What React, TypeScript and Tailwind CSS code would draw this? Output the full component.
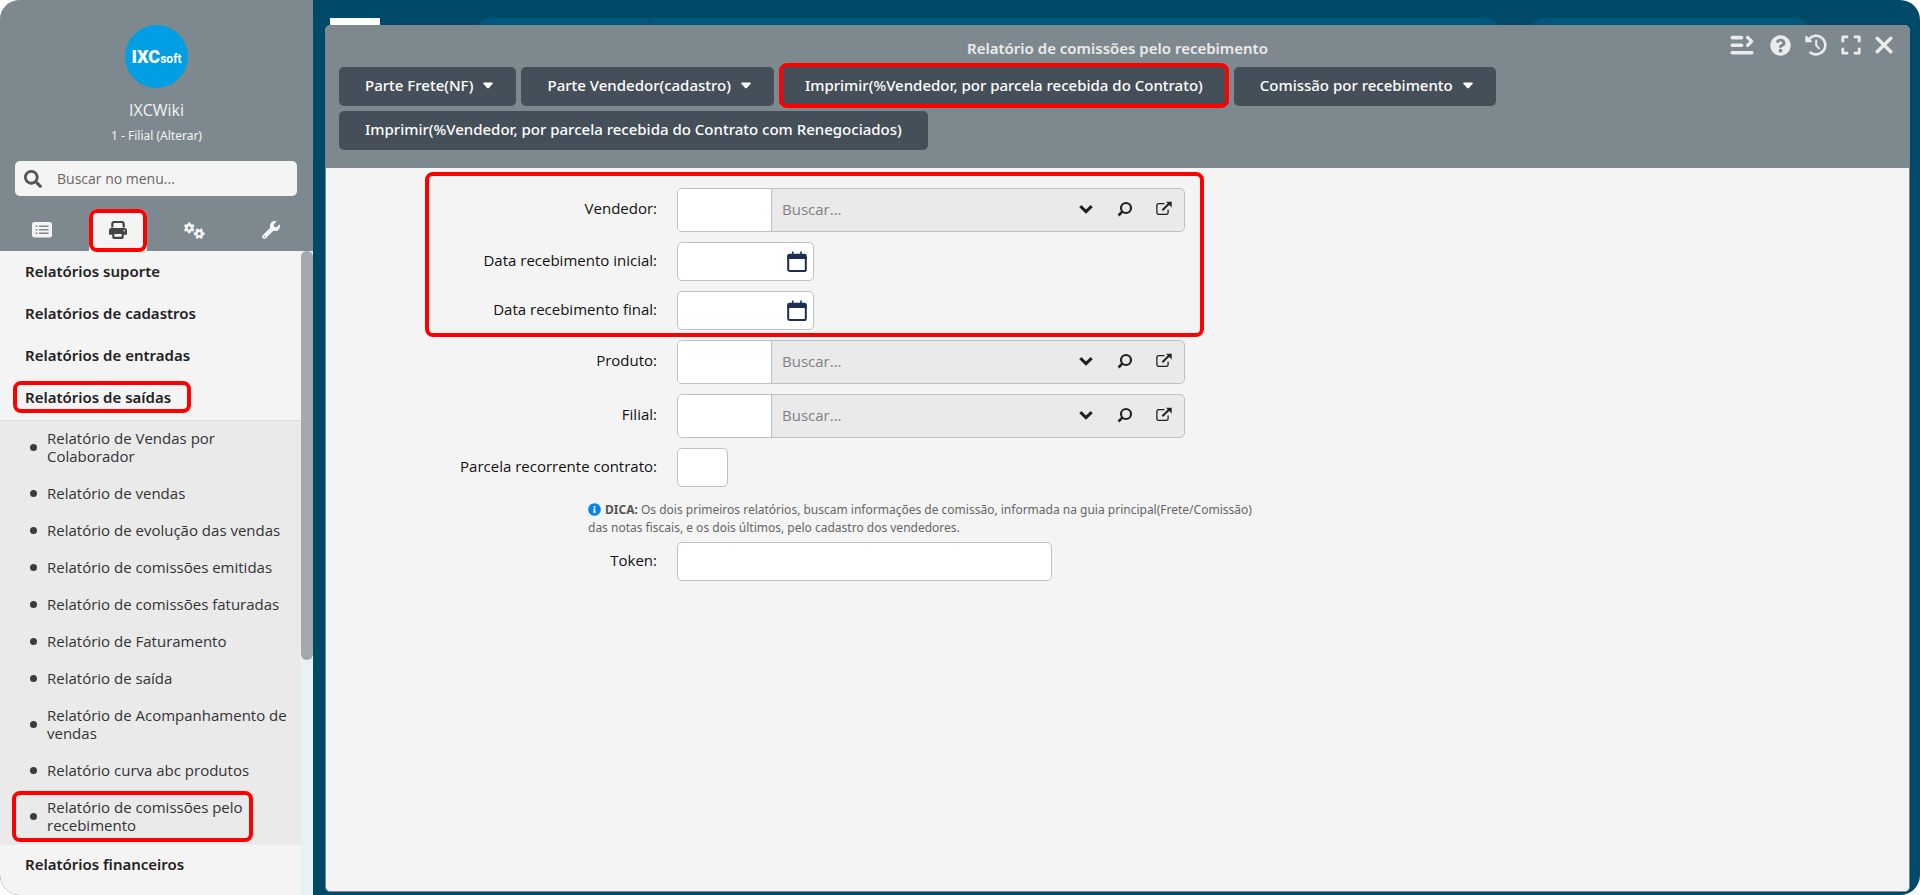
import React from 'react';
import { FaWrench, FaSearch, FaInfoCircle, FaQuestionCircle } from 'react-icons/fa';
import { FaGears } from 'react-icons/fa6';

type MenuItem = { label: string; active?: boolean };

const topMenu: MenuItem[] = [
  { label: 'Relatórios suporte' },
  { label: 'Relatórios de cadastros' },
  { label: 'Relatórios de entradas' },
  { label: 'Relatórios de saídas', active: true },
];

const subMenu: MenuItem[] = [
  { label: 'Relatório de Vendas por Colaborador' },
  { label: 'Relatório de vendas' },
  { label: 'Relatório de evolução das vendas' },
  { label: 'Relatório de comissões emitidas' },
  { label: 'Relatório de comissões faturadas' },
  { label: 'Relatório de Faturamento' },
  { label: 'Relatório de saída' },
  { label: 'Relatório de Acompanhamento de vendas' },
  { label: 'Relatório curva abc produtos' },
  { label: 'Relatório de comissões pelo recebimento', active: true },
];

const actions = [
  { label: 'Parte Frete(NF)', menu: true },
  { label: 'Parte Vendedor(cadastro)', menu: true },
  { label: 'Imprimir(%Vendedor, por parcela recebida do Contrato)', active: true },
  { label: 'Comissão por recebimento', menu: true },
  { label: 'Imprimir(%Vendedor, por parcela recebida do Contrato com Renegociados)' },
];

const Mark: React.FC<{ className: string }> = ({ className }) => (
  <span className={`pointer-events-none absolute border-4 border-[#ff0000] rounded-lg ${className}`} />
);

const CaretIcon = () => (
  <svg width="10" height="7" viewBox="0 0 10 7" fill="currentColor" className="-mr-[3px]">
    <path d="M1 .5h8c.8 0 1.100.8.6 1.300L5.900 5.900c-.5.5-1.300.5-1.800 0L.4 1.800C-.1 1.300.2.5 1 .5z" />
  </svg>
);

const ChevronIcon = () => (
  <svg width="16" height="16" viewBox="0 0 16 16" fill="none" stroke="#222" strokeWidth="3">
    <path d="M2.300 5.200 8 10.600l5.700-5.400" />
  </svg>
);

const LookupIcon = () => (
  <svg width="16" height="16" viewBox="0 0 16 16" fill="none" stroke="#222">
    <circle cx="9" cy="7" r="5" strokeWidth="2.200" />
    <path d="M5.300 10.700 1.500 14.500" strokeWidth="2.600" />
  </svg>
);

const ExternalIcon = () => (
  <svg width="16" height="16" viewBox="0 0 16 16" fill="none" stroke="#222">
    <path d="M8.500 2.700H2.500a1.600 1.600 0 0 0-1.600 1.600v7.400a1.600 1.600 0 0 0 1.600 1.600h8a1.600 1.600 0 0 0 1.600-1.600V8.500" strokeWidth="1.300" />
    <path d="M6.300 9.200 13 2.800" strokeWidth="2" />
    <path d="M10 .8h5.700v5.600z" fill="#222" stroke="none" />
  </svg>
);

const CalendarIcon = () => (
  <svg width="20" height="22" viewBox="0 0 20 22" fill="none" stroke="#1c2f50">
    <path d="M1.200 5.500v13a1.600 1.600 0 0 0 1.600 1.600h14.400a1.600 1.600 0 0 0 1.600-1.600v-13" strokeWidth="2" />
    <path d="M.2 8V5a2.200 2.200 0 0 1 2.200-2.200h15.200A2.200 2.200 0 0 1 19.800 5v3z" fill="#1c2f50" stroke="none" />
    <path d="M5.700.5v3M14 .5v3" strokeWidth="1.600" />
  </svg>
);

const ListIcon = () => (
  <svg width="20" height="16" viewBox="0 0 20 16">
    <rect width="20" height="15.500" rx="2.500" fill="#f4f4f4" />
    <path d="M3.600 4.200h1.800M3.600 7.700h1.800M3.600 11.200h1.800M7 4.200h9.500M7 7.700h9.500M7 11.200h9.500" stroke="#7d898e" strokeWidth="1.500" />
  </svg>
);

const PrintIcon = () => (
  <svg width="18" height="18" viewBox="0 0 18 18" fill="none" stroke="currentColor">
    <path d="M3.300 6.500V3a2 2 0 0 1 2-2h7.400a2 2 0 0 1 2 2v3.500" strokeWidth="2.200" />
    <path d="M2.500 7h13A2.500 2.500 0 0 1 18 9.500V13a.8.800 0 0 1-.8.800H.8A.8.800 0 0 1 0 13V9.500A2.500 2.500 0 0 1 2.500 7z" fill="currentColor" stroke="none" />
    <path d="M4.300 12h9.400v3.400a1.500 1.500 0 0 1-1.500 1.500H5.800a1.500 1.500 0 0 1-1.500-1.500z" fill="#f4f4f4" strokeWidth="2.200" />
    <circle cx="15.300" cy="9.600" r=".8" fill="#f4f4f4" stroke="none" />
  </svg>
);

const SkipIcon = () => (
  <svg width="26" height="22" viewBox="0 -1 26 22" fill="none" stroke="currentColor" strokeLinecap="round" strokeLinejoin="round">
    <path d="M2.200 2.600h9.400M2.200 10.200h9.400M2.200 17.700h19.600" strokeWidth="3.600" />
    <path d="M17.600 2.400 21.600 6.400l-4 4" strokeWidth="3.400" />
  </svg>
);

const HistoryIcon = () => (
  <svg width="22" height="22" viewBox="0 0 22 22" fill="none" stroke="currentColor" strokeLinecap="round" strokeLinejoin="round">
    <path d="M3.800 5.200A9.300 9.300 0 1 1 5.600 18.600" strokeWidth="2.600" />
    <path d="M1.200 2.600v4.800h4.800z" fill="currentColor" strokeWidth="1.800" />
    <path d="M11.200 6.600v4.800l2.900 3" strokeWidth="2" />
  </svg>
);

const ExpandIcon = () => (
  <svg width="20" height="20" viewBox="0 0 20 20" fill="none" stroke="currentColor" strokeWidth="2.800" strokeLinejoin="round">
    <path d="M1.800 7.200V1.800h5.400M12.800 1.800h5.400v5.400M18.200 12.800v5.400h-5.400M7.200 18.200H1.800v-5.400" />
  </svg>
);

const CloseIcon = () => (
  <svg width="18" height="18" viewBox="0 0 18 18" fill="none" stroke="currentColor" strokeWidth="3.400" strokeLinecap="round">
    <path d="m2.200 2.200 13.600 13.600M15.800 2.200 2.200 15.800" />
  </svg>
);

const fieldClass = 'bg-white border border-[#bcc1c5] rounded-[5px] outline-none';

const Row: React.FC<{ id: string; label: string; children: React.ReactNode }> = ({ id, label, children }) => (
  <div className="flex items-center">
    <label htmlFor={id} className="w-[331px] pb-1 text-right text-[15px] leading-5 text-[#111]">{label}</label>
    <div className="ml-5">{children}</div>
  </div>
);

const LookupField: React.FC<{ id: string; label: string }> = ({ id, label }) => (
  <Row id={id} label={label}>
    <div className="flex h-11 w-[508px] overflow-hidden border border-[#bcc1c5] rounded-[5px] bg-[#eaeaea]">
      <input id={id} type="text" className="w-[94px] bg-white border-r border-[#bcc1c5] outline-none px-2" />
      <input type="text" aria-label={`Buscar ${label}`} placeholder="Buscar..." className="flex-1 min-w-0 px-[10px] pb-[2px] text-[15px] text-[#333] placeholder:text-[#818181] outline-none" />
      <div className="flex items-center gap-[23px] pr-3 pb-[3px]">
        <button type="button" aria-label="Abrir lista"><ChevronIcon /></button>
        <button type="button" aria-label="Pesquisar"><LookupIcon /></button>
        <button type="button" aria-label="Abrir cadastro"><ExternalIcon /></button>
      </div>
    </div>
  </Row>
);

const DateField: React.FC<{ id: string; label: string }> = ({ id, label }) => (
  <Row id={id} label={label}>
    <div className={`flex h-[39px] w-[137px] items-center pr-[6px] ${fieldClass}`}>
      <input id={id} type="text" className="flex-1 min-w-0 px-2 outline-none" />
      <button type="button" aria-label="Abrir calendário"><CalendarIcon /></button>
    </div>
  </Row>
);

const Sidebar: React.FC = () => (
  <aside className="flex w-[313px] shrink-0 flex-col bg-[#f4f4f4]">
    <header className="bg-[#7d898e] pt-[25px]">
      <div className="mx-auto flex size-[63px] items-center justify-center rounded-full bg-[#009fe3] font-['Roboto',sans-serif] text-white">
        <span className="flex items-baseline">
          <span className="text-[18px] font-black">IXC</span>
          <span className="text-[12px] font-bold">soft</span>
        </span>
      </div>
      <p className="mt-[10px] text-center text-[16px] leading-6 text-[#f4f4f4]">IXCWiki</p>
      <p className="mt-1 text-center font-['Noto_Sans',sans-serif] text-[12px] leading-5 text-[#f4f4f4]">
        1 - Filial <a href="#filial">(Alterar)</a>
      </p>
      <div className="ml-[15px] mr-4 mt-[15px] flex h-[35px] items-center rounded-[5px] bg-[#f4f4f4] pl-[9px]">
        <FaSearch className="size-[18px] text-[#555]" />
        <input type="text" aria-label="Buscar no menu" placeholder="Buscar no menu..." className="ml-[15px] flex-1 min-w-0 pb-px text-[14px] text-[#333] placeholder:text-[#666] outline-none" />
      </div>
      <nav className="mt-[13px] grid h-[42px] grid-cols-4 px-1 text-[#f4f4f4]">
        <button type="button" aria-label="Cadastros" className="flex items-center justify-center"><ListIcon /></button>
        <button type="button" aria-label="Relatórios" className="relative ml-[9px] mr-[10px] flex items-center justify-center rounded-t-lg bg-[#f4f4f4] text-[#444]">
          <PrintIcon />
          <Mark className="inset-x-0 top-0 -bottom-px" />
        </button>
        <button type="button" aria-label="Configurações" className="flex items-center justify-center"><FaGears className="size-[21px]" /></button>
        <button type="button" aria-label="Ferramentas" className="flex items-center justify-center"><FaWrench className="size-[18px]" /></button>
      </nav>
    </header>
    <div className="flex flex-1">
      <nav className="flex-1 pt-px">
        {topMenu.map((item) => (
          <a key={item.label} href="#menu" className="flex h-[42px] items-center pb-1 pl-[25px] font-['Noto_Sans',sans-serif] text-[15px] font-semibold text-[#222]">
            <span className="relative">
              {item.label}
              {item.active && <Mark className="-left-3 -right-5 -top-[5px] -bottom-[5px]" />}
            </span>
          </a>
        ))}
        <ul className="border-t border-[#dcdcdc] bg-[#eaeaea]">
          {subMenu.map((item) => (
            <li key={item.label}>
              <a href="#relatorio" className="relative flex items-center gap-[10px] pt-2 pb-[11px] pl-[30px] pr-3 text-[15px] leading-[18px] text-[#333]">
                <span className="size-[7px] shrink-0 rounded-full bg-[#3c3c3c]" />
                <span>{item.label}</span>
                {item.active && <Mark className="left-3 right-12 top-[1px] bottom-[3px]" />}
              </a>
            </li>
          ))}
        </ul>
        <a href="#menu" className="flex h-[42px] items-center pb-1 pl-[25px] font-['Noto_Sans',sans-serif] text-[15px] font-semibold text-[#222]">Relatórios financeiros</a>
      </nav>
      <div className="w-3 bg-[#e8f1f6]">
        <div className="h-[409px] rounded-full bg-[#a1a9ae]" />
      </div>
    </div>
  </aside>
);

const App: React.FC = () => (
  <div className="flex min-h-screen overflow-hidden rounded-[20px] bg-[#004a69] font-['Open_Sans','Noto_Sans',sans-serif]">
    <Sidebar />
    <main className="relative flex flex-1 flex-col pt-[25px] pr-[10px] pb-[3px] pl-3">
      {/* desktop bar hidden behind the window */}
      <div className="absolute inset-x-0 top-[18px] flex h-10 pl-[17px] pr-[107px]">
        <div className="w-[50px] bg-white" />
        <div className="ml-[94px] flex-1 rounded-full bg-[#00587f]">
          <div className="ml-[175px] h-full w-px bg-[#004f73]" />
        </div>
        <div className="ml-6 w-[286px] rounded-full bg-[#00587f]" />
      </div>

      <section className="relative flex flex-1 flex-col overflow-hidden rounded-[5px] border border-[#7d898e] bg-[#f4f4f4]">
        <header className="relative bg-[#7d898e] px-[13px] pb-[18px] pt-[10px]">
          <h1 className="text-center font-['Noto_Sans',sans-serif] text-[15px] font-semibold leading-6 text-[#ebebeb]">Relatório de comissões pelo recebimento</h1>
          <div className="absolute right-4 top-2 flex items-center gap-[14px] text-[#ebebeb]">
            <button type="button" aria-label="Atalhos"><SkipIcon /></button>
            <button type="button" aria-label="Ajuda"><FaQuestionCircle className="size-[21px]" /></button>
            <button type="button" aria-label="Histórico"><HistoryIcon /></button>
            <button type="button" aria-label="Expandir"><ExpandIcon /></button>
            <button type="button" aria-label="Fechar"><CloseIcon /></button>
          </div>
          <div className="mt-[7px] flex max-w-[1200px] flex-wrap gap-[5px]">
            {actions.map((action) => (
              <button key={action.label} type="button" className="relative flex h-[39px] items-center gap-[10px] rounded-[5px] bg-[#454f59] px-[26px] pb-[2px] font-['Noto_Sans',sans-serif] text-[15px] font-medium text-white">
                {action.label}
                {action.menu && <CaretIcon />}
                {action.active && <Mark className="inset-x-0 -top-1 -bottom-[2px]" />}
              </button>
            ))}
          </div>
        </header>

        <form className="flex flex-col gap-[10px] pt-5">
          <div className="relative flex flex-col gap-[10px]">
            <LookupField id="vendedor" label="Vendedor:" />
            <DateField id="data-inicial" label="Data recebimento inicial:" />
            <DateField id="data-final" label="Data recebimento final:" />
            <Mark className="left-[99px] w-[779px] -top-4 -bottom-[7px]" />
          </div>
          <LookupField id="produto" label="Produto:" />
          <LookupField id="filial" label="Filial:" />
          <Row id="parcela" label="Parcela recorrente contrato:">
            <input id="parcela" type="text" className={`block h-[39px] w-[51px] px-2 ${fieldClass}`} />
          </Row>
          <p className="-mb-[5px] ml-[262px] mt-1 font-['Noto_Sans',sans-serif] text-[12px] leading-[18px] text-[#666]">
            <FaInfoCircle className="mr-1 inline size-[13px] align-[-2px] text-[#0a84e8]" />
            <strong className="font-bold text-[#555]">DICA:</strong> Os dois primeiros relatórios, buscam informações de comissão, informada na guia principal(Frete/Comissão)
            <br />
            das notas fiscais, e os dois últimos, pelo cadastro dos vendedores.
          </p>
          <Row id="token" label="Token:">
            <input id="token" type="text" className={`block h-[39px] w-[375px] px-2 ${fieldClass}`} />
          </Row>
        </form>
      </section>
    </main>
  </div>
);

export default App;
